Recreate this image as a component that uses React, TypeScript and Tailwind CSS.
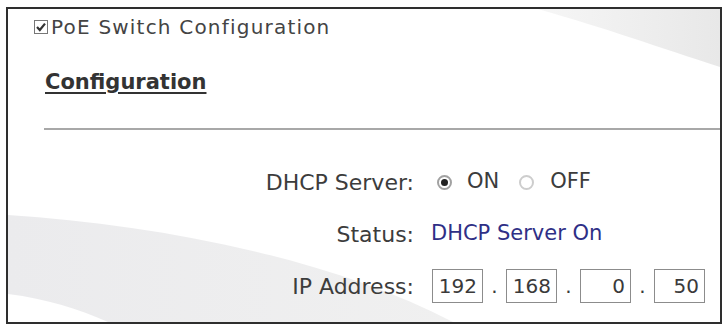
import React from "react";

const font = { fontFamily: '"DejaVu Sans", Verdana, sans-serif' };

const Radio: React.FC<{ checked?: boolean }> = ({ checked }) => (
  <span
    className={`flex h-[15px] w-[15px] shrink-0 items-center justify-center rounded-full border-2 bg-white ${
      checked ? "border-[#a2a2a2]" : "border-[#cdcdcd]"
    }`}
  >
    {checked && <span className="h-[7px] w-[7px] rounded-full bg-[#222]" />}
  </span>
);

const Octet: React.FC<{ value: string }> = ({ value }) => (
  <div className="flex h-[34px] w-[51px] items-center justify-end border border-[#8c8c8c] bg-white pr-[5px] text-[20px] text-[#3a3a3a]">
    {value}
  </div>
);

const Dot = () => <span className="w-[23px] text-center text-[20px] text-[#3a3a3a]">.</span>;

export default function App() {
  return (
    <div className="h-[326px] w-[726px] bg-white pl-[6px] pt-[7px]" style={font}>
      <div className="relative h-[317px] w-[716px] overflow-hidden border-2 border-[#2e2e2e] bg-white">
        {/* faint background swooshes */}
        <svg className="absolute inset-0" width="712" height="313" viewBox="0 0 712 313">
          <defs>
            <linearGradient id="tr" x1="0" y1="0" x2="1" y2="0">
              <stop offset="0" stopColor="#f6f6f6" />
              <stop offset="1" stopColor="#e8e8e8" />
            </linearGradient>
            <linearGradient id="bl" x1="0" y1="0" x2="1" y2="0">
              <stop offset="0" stopColor="#ebebed" />
              <stop offset="1" stopColor="#f0f0f0" />
            </linearGradient>
          </defs>
          <path d="M530,0 C600,20 650,38 712,58 L712,0 Z" fill="url(#tr)" />
          <path d="M0,206 C150,216 320,248 445,313 L100,313 C70,300 40,290 0,285 Z" fill="url(#bl)" />
        </svg>

        <div className="relative flex flex-col">
          <div className="flex h-[36px] items-center pl-[26px] text-[20px] tracking-[1.2px] text-[#444]">
            <span className="mr-[3px] flex h-[14px] w-[14px] shrink-0 items-center justify-center border border-[#777] bg-white">
              <svg width="12" height="12" viewBox="0 0 12 12">
                <path d="M2 6 L4.8 9 L10 2.6" fill="none" stroke="#333" strokeWidth="2.2" />
              </svg>
            </span>
            PoE Switch Configuration
          </div>

          <div className="ml-[37px] mt-[22px] h-[30px] text-[21px] font-bold leading-[30px] text-[#333] underline decoration-[1.5px] underline-offset-[3px]">
            Configuration
          </div>

          <div className="ml-[36px] mt-[31px] h-[2px] bg-[#a8a8a8]" />

          <div className="mt-[26px] grid grid-cols-[406px_1fr] gap-x-[17px] text-[22px] text-[#3c3c3c]">
            <div className="flex h-[52px] items-center justify-end">DHCP Server:</div>
            <div className="flex h-[52px] items-center text-[21px]">
              <span className="ml-[6px]"><Radio checked /></span>
              <span className="ml-[15px]">ON</span>
              <span className="ml-[20px]"><Radio /></span>
              <span className="ml-[16px]">OFF</span>
            </div>

            <div className="flex h-[52px] items-center justify-end">Status:</div>
            <div className="flex h-[52px] items-center text-[21px] text-[#2f2f86]">DHCP Server On</div>

            <div className="flex h-[52px] items-center justify-end">IP Address:</div>
            <div className="flex h-[52px] items-center pl-[1px]">
              <Octet value="192" />
              <Dot />
              <Octet value="168" />
              <Dot />
              <Octet value="0" />
              <Dot />
              <Octet value="50" />
            </div>
          </div>
        </div>
      </div>
    </div>
  );
}
